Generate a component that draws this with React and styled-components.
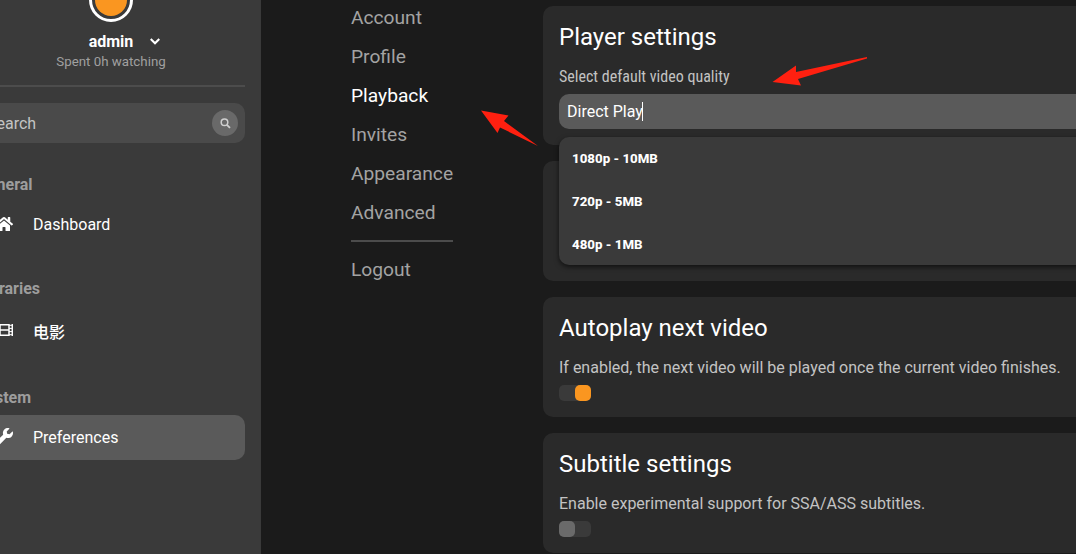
import React from 'react'
import styled, {createGlobalStyle} from 'styled-components'
import {FaHome, FaWrench} from 'react-icons/fa'

const GlobalStyle = createGlobalStyle`
  * {
    box-sizing: border-box;
  }
  body {
    margin: 0;
    overflow: hidden;
    background: #1b1b1b;
    color: #fff;
    font-family: Roboto, "Noto Sans CJK SC", sans-serif;
    font-size: 16px;
  }
`

const Page = styled.div`
  position: relative;
  display: flex;
  height: 554px;
  overflow: hidden;
`

const Sidebar = styled.aside`
  display: flex;
  flex-direction: column;
  flex: 0 0 300px;
  margin-left: -39px;
  padding: 0 16px;
  background: #3a3a3a;
`

const Account = styled.div`
  display: flex;
  flex-direction: column;
  align-items: center;
  height: 85px;
`

const Avatar = styled.div`
  flex: none;
  width: 44px;
  height: 44px;
  margin-top: -22px;
  padding: 3px;
  border: 3px solid #fff;
  border-radius: 50%;
  &::before {
    content: '';
    display: block;
    height: 100%;
    border-radius: 50%;
    background: #fa9620;
  }
`

const UserName = styled.div`
  display: flex;
  align-items: center;
  gap: 17px;
  height: 20px;
  margin: 9px 0 0 27px;
  font-weight: bold;
`

const Spent = styled.div`
  margin-top: 2px;
  line-height: 18px;
  font-size: 13.3px;
  color: #a0a0a0;
`

const Divider = styled.div`
  height: 2px;
  background: #4c4c4c;
`

const Search = styled.div`
  display: flex;
  align-items: center;
  justify-content: space-between;
  height: 40px;
  margin-top: 16px;
  padding: 0 7px 0 10px;
  border-radius: 10px;
  background: #4a4a4a;
  color: #c4c4c4;
`

const SearchButton = styled.span`
  display: flex;
  align-items: center;
  justify-content: center;
  width: 26px;
  height: 26px;
  border-radius: 50%;
  background: #696969;
`

const Group = styled.div`
  margin-top: ${(props) => props.gap}px;
`

const GroupTitle = styled.h4`
  margin: 0 0 7px;
  line-height: 20px;
  font-size: 16px;
  color: #9d9d9d;
`

const Item = styled.div`
  display: flex;
  align-items: center;
  gap: 20px;
  height: ${(props) => props.height || 45}px;
  padding-left: 18px;
  border-radius: 10px;
  background: ${(props) => (props.active ? '#5a5a5a' : 'transparent')};
  svg {
    flex: 0 0 18px;
    margin-bottom: 1px;
  }
`

const LibraryName = styled.span`
  font-weight: 500;
`

const Content = styled.main`
  display: flex;
  align-items: flex-start;
  flex: none;
`

const Menu = styled.nav`
  display: flex;
  flex-direction: column;
  width: 102px;
  margin: -2px 90px 0;
`

const MenuLink = styled.a`
  height: 39px;
  line-height: 40px;
  font-size: 19.2px;
  color: ${(props) => (props.active ? '#fff' : '#a3a3a3')};
`

const MenuDivider = styled(Divider)`
  margin: 8px 0;
`

const Cards = styled.div`
  display: flex;
  flex-direction: column;
  gap: 16px;
  width: 600px;
  padding-top: 6px;
`

const Card = styled.section`
  height: ${(props) => props.height}px;
  padding: 16px;
  border-radius: 10px;
  background: #2a2a2a;
`

const Title = styled.h2`
  margin: 0;
  line-height: 30px;
  font-size: 24px;
  font-weight: 400;
`

const Text = styled.p`
  margin: 15px 0 0;
  line-height: 20px;
  color: #c3c3c3;
`

const FieldLabel = styled.p`
  margin: 15px 0 7px;
  line-height: 20px;
  font-family: "Roboto Condensed", Roboto, sans-serif;
  font-stretch: condensed;
  color: #c3c3c3;
`

const Select = styled.div`
  position: relative;
`

const SelectInput = styled.div`
  display: flex;
  align-items: center;
  height: 35px;
  padding: 0 8px;
  border-radius: 10px;
  background: #5a5a5a;
  &::after {
    content: '';
    width: 1px;
    height: 19px;
    margin-left: -1px;
    background: #fff;
  }
`

const Options = styled.div`
  position: absolute;
  z-index: 1;
  top: 43px;
  left: 0;
  right: 0;
  height: 128px;
  border-radius: 10px;
  background: #3a3a3a;
  box-shadow: 0 2px 5px rgba(0, 0, 0, 0.6);
`

const Option = styled.div`
  padding-left: 13px;
  line-height: 43px;
  font-size: 13.3px;
  font-weight: 800;
`

const Toggle = styled.div`
  display: flex;
  justify-content: ${(props) => (props.on ? 'flex-end' : 'flex-start')};
  width: 32px;
  height: 16px;
  margin-top: 7px;
  border-radius: 5px;
  background: #3a3a3a;
  &::before {
    content: '';
    width: 16px;
    border-radius: 5px;
    background: ${(props) => (props.on ? '#fa9620' : '#6a6a6a')};
  }
`

// red pointers drawn over the page
const Pointers = styled.svg`
  position: absolute;
  z-index: 2;
  top: 0;
  left: 0;
  fill: #ff2010;
`

const ChevronIcon = () => (
  <svg width="10" height="7" viewBox="0 0 10 7" fill="none" stroke="#fff" strokeWidth="2.2">
    <path d="M0.7 1L5 5.3L9.3 1"/>
  </svg>
)

const SearchIcon = () => (
  <svg width="11" height="11" viewBox="0 0 11 11" fill="none" stroke="#d0d0d0" strokeWidth="1.5">
    <circle cx="4.5" cy="4.3" r="3.3"/>
    <path d="M6.9 6.8L10 9.9" strokeWidth="1.8"/>
  </svg>
)

const FilmIcon = () => (
  <svg width="18" height="12" viewBox="0 0 18 12" fill="none" stroke="#fff" strokeWidth="1.5">
    <path d="M1 0V12M17.3 0V12M5 0V12M14 0V12M5 0.7H14M5 6H14M5 11.3H14"/>
    <path d="M1 1.3H5M1 4.4H5M1 7.6H5M1 10.7H5M14 1.3H17M14 4.4H17M14 7.6H17M14 10.7H17" strokeWidth="1"/>
  </svg>
)

const App = () => (
  <Page>
    <GlobalStyle/>
    <Sidebar>
      <Account>
        <Avatar/>
        <UserName>admin <ChevronIcon/></UserName>
        <Spent>Spent 0h watching</Spent>
      </Account>
      <Divider/>
      <Search>
        Search
        <SearchButton><SearchIcon/></SearchButton>
      </Search>
      <Group gap={32}>
        <GroupTitle>General</GroupTitle>
        <Item><FaHome size={16}/>Dashboard</Item>
      </Group>
      <Group gap={32}>
        <GroupTitle>Libraries</GroupTitle>
        <Item height={49}><FilmIcon/><LibraryName>电影</LibraryName></Item>
      </Group>
      <Group gap={33}>
        <GroupTitle>System</GroupTitle>
        <Item active><FaWrench size={18}/>Preferences</Item>
      </Group>
    </Sidebar>
    <Content>
      <Menu>
        <MenuLink>Account</MenuLink>
        <MenuLink>Profile</MenuLink>
        <MenuLink active>Playback</MenuLink>
        <MenuLink>Invites</MenuLink>
        <MenuLink>Appearance</MenuLink>
        <MenuLink>Advanced</MenuLink>
        <MenuDivider/>
        <MenuLink>Logout</MenuLink>
      </Menu>
      <Cards>
        <Card height={139}>
          <Title>Player settings</Title>
          <FieldLabel>Select default video quality</FieldLabel>
          <Select>
            <SelectInput>Direct Play</SelectInput>
            <Options>
              <Option>1080p - 10MB</Option>
              <Option>720p - 5MB</Option>
              <Option>480p - 1MB</Option>
            </Options>
          </Select>
        </Card>
        <Card height={120}/>
        <Card height={120}>
          <Title>Autoplay next video</Title>
          <Text>If enabled, the next video will be played once the current video finishes.</Text>
          <Toggle on/>
        </Card>
        <Card height={120}>
          <Title>Subtitle settings</Title>
          <Text>Enable experimental support for SSA/ASS subtitles.</Text>
          <Toggle/>
        </Card>
      </Cards>
    </Content>
    <Pointers width="1076" height="554">
      <path d="M481 110.5L508.5 115.5L504 121L538 146L500 127.5L497.5 133Z"/>
      <path d="M772.5 82L796 65.5V72L867 57V58.5L798 79L801 85.5Z"/>
    </Pointers>
  </Page>
)

export default App
